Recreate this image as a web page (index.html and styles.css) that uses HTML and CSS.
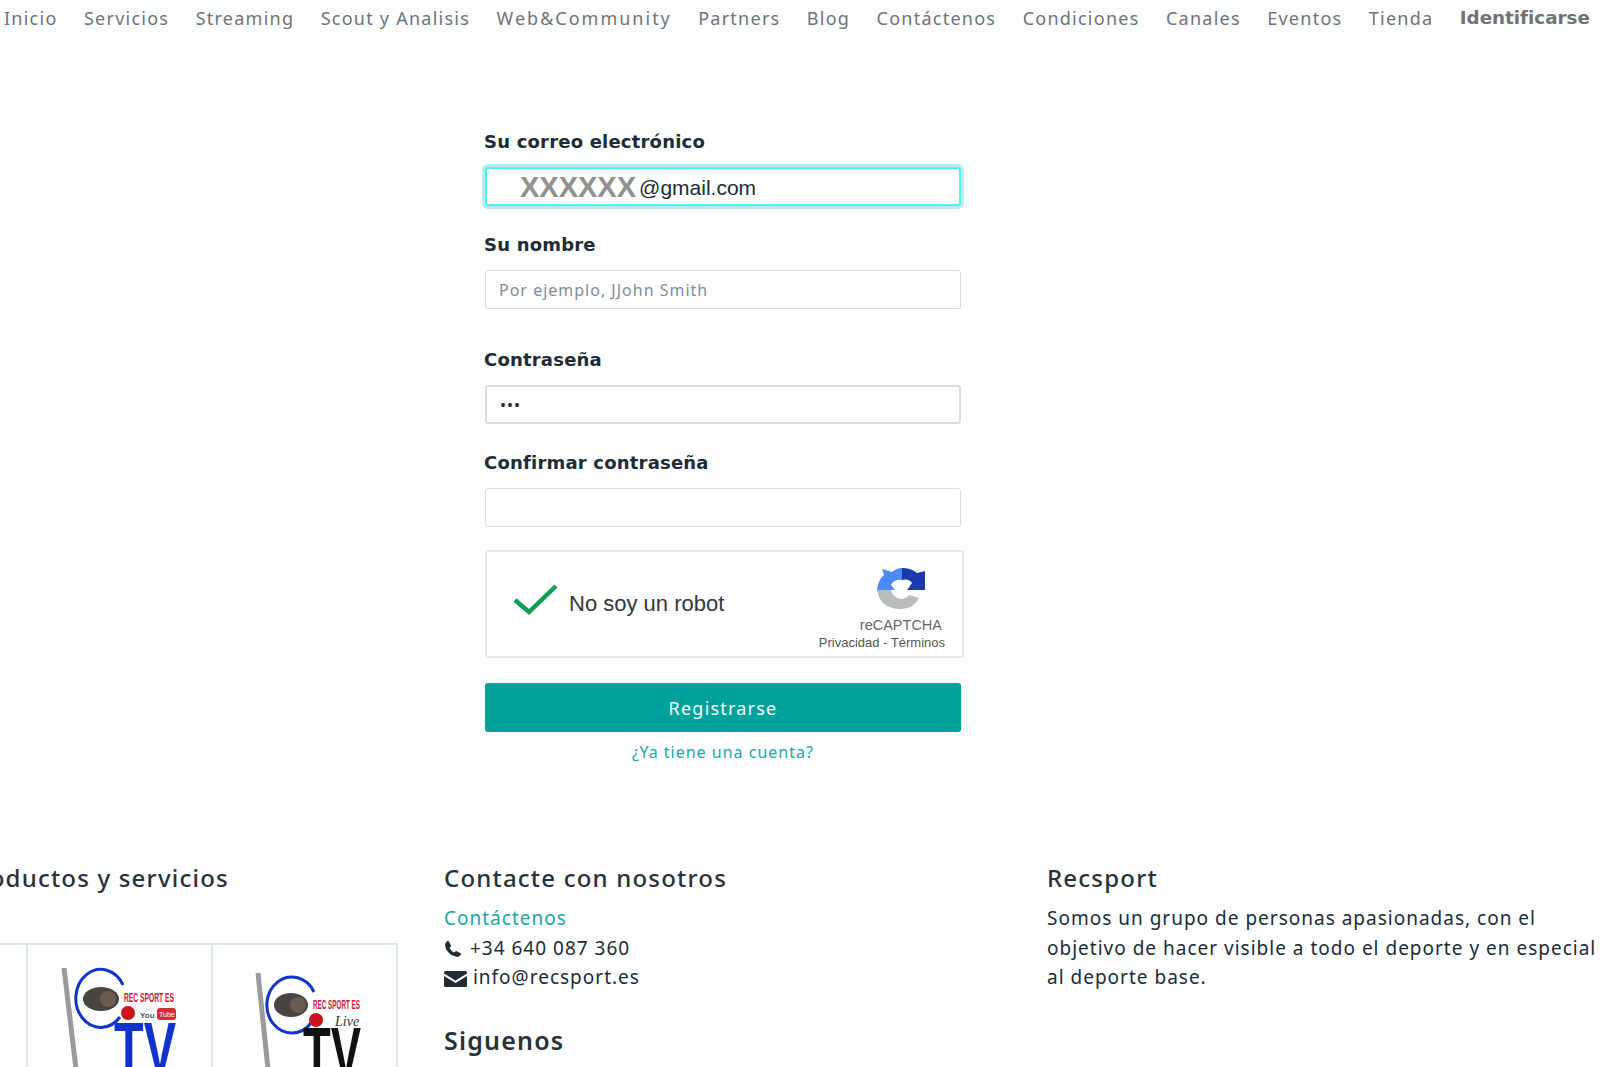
FILE: index.html
```html
<!DOCTYPE html>
<html lang="es">
<head>
    <meta charset="UTF-8">
    <title>Recsport - Registrarse</title>
    <link rel="stylesheet" href="styles.css">
</head>
<body>
    <nav class="topnav">
        <a href="#">Inicio</a>
        <a href="#">Servicios</a>
        <a href="#">Streaming</a>
        <a href="#">Scout y Analisis</a>
        <a href="#" class="wide">Web&amp;Community</a>
        <a href="#">Partners</a>
        <a href="#">Blog</a>
        <a href="#">Contáctenos</a>
        <a href="#">Condiciones</a>
        <a href="#">Canales</a>
        <a href="#">Eventos</a>
        <a href="#">Tienda</a>
        <a href="#" class="active">Identificarse</a>
    </nav>

    <main class="register">
        <div class="field">
            <label>Su correo electrónico</label>
            <div class="control focused"><span class="masked">XXXXXX</span><span class="email">@gmail.com</span></div>
        </div>
        <div class="field field-wide">
            <label>Su nombre</label>
            <input class="control" type="text" placeholder="Por ejemplo, JJohn Smith">
        </div>
        <div class="field">
            <label>Contraseña</label>
            <input class="control strong" type="password" value="123">
        </div>
        <div class="field field-last">
            <label>Confirmar contraseña</label>
            <input class="control" type="password">
        </div>

        <div class="captcha">
            <svg class="captcha-check" viewBox="0 0 46 32" width="46" height="32">
                <path d="M2 16 L16 28 L43 2" fill="none" stroke="#0f9d58" stroke-width="4.5"/>
            </svg>
            <span class="captcha-text">No soy un robot</span>
            <div class="captcha-brand">
                <svg viewBox="0 0 48 42" width="48" height="42">
                    <path d="M0 22 Q1 12 7 7 L5 1 L15 4 Q20 0 25 0 V12 Q17 11 14 17 L18 22 Z" fill="#4a8af4"/>
                    <path d="M25 0 Q34 0 40 5 L48 3 V22 H30 L35 15 Q32 10 25 12 Z" fill="#1c3aa9"/>
                    <path d="M0 22 H14 Q16 30 24 31 Q29 31 32 27 L42 30 Q36 41 24 41 Q3 41 0 22 Z" fill="#b9bcbc"/>
                </svg>
                <span class="captcha-name">reCAPTCHA</span>
                <span class="captcha-links">Privacidad - Términos</span>
            </div>
        </div>

        <button class="submit" type="button">Registrarse</button>
        <a class="login-link" href="#">¿Ya tiene una cuenta?</a>
    </main>

    <footer class="footer">
        <section>
            <h3 class="products-title">Productos y servicios</h3>
            <div class="channels">
                <div class="channel"></div>
                <div class="channel">
                    <svg viewBox="0 0 185 124" width="185" height="124">
                        <path d="M36 23 L48 124" stroke="#9a9a9a" stroke-width="5"/>
                        <path d="M95 40 A25 29 0 1 0 92 72" fill="none" stroke="#1133cc" stroke-width="3"/>
                        <ellipse cx="73" cy="54" rx="18" ry="12" fill="#4a4440"/>
                        <circle cx="80" cy="54" r="8" fill="#6b5c50"/>
                        <circle cx="100" cy="68" r="7" fill="#c8141e"/>
                        <text class="logo-red" x="96" y="57" textLength="50" lengthAdjust="spacingAndGlyphs">REC SPORT ES</text>
                        <text class="logo-you" x="112" y="73">You</text>
                        <rect x="129" y="63" width="19" height="12" rx="3" fill="#d22c36"/>
                        <text class="logo-tube" x="131" y="72">Tube</text>
                        <text class="logo-tv logo-blue" x="86" y="128" textLength="62" lengthAdjust="spacingAndGlyphs">TV</text>
                    </svg>
                </div>
                <div class="channel">
                    <svg viewBox="0 0 185 124" width="185" height="124">
                        <path d="M45 28 L55 124" stroke="#9a9a9a" stroke-width="5"/>
                        <path d="M101 47 A25 28 0 1 0 98 78" fill="none" stroke="#1133cc" stroke-width="3"/>
                        <ellipse cx="78" cy="60" rx="17" ry="12" fill="#4a4440"/>
                        <circle cx="85" cy="60" r="8" fill="#6b5c50"/>
                        <circle cx="103" cy="75" r="7" fill="#c8141e"/>
                        <text class="logo-red" x="100" y="64" textLength="47" lengthAdjust="spacingAndGlyphs">REC SPORT ES</text>
                        <text class="logo-live" x="122" y="81">Live</text>
                        <text class="logo-tv" x="90" y="133" textLength="58" lengthAdjust="spacingAndGlyphs">TV</text>
                    </svg>
                </div>
            </div>
        </section>

        <section>
            <h3>Contacte con nosotros</h3>
            <p><a href="#">Contáctenos</a></p>
            <p class="contact-row">
                <svg class="phone" viewBox="0 0 18 18" width="18" height="18"><path d="M4.5 1 L7 5.5 Q7.2 6.2 6.6 6.8 L5.5 7.9 Q7.2 11 10.2 12.6 L11.4 11.4 Q12 10.9 12.7 11.2 L17 13.6 Q17.4 14 17 14.6 Q15.4 17 13.4 16.9 Q8.2 16.4 4.6 12.6 Q1 8.8 1 4.8 Q1 2.8 3.4 1 Q4 0.6 4.5 1 Z" fill="#212b36"/></svg>
                +34 640 087 360
            </p>
            <p class="contact-row">
                <svg viewBox="0 0 23 16" width="23" height="16"><path d="M0 1.5 Q0 0 1.5 0 H21.5 Q23 0 23 1.5 V2.5 L11.5 9.5 L0 2.5 Z M0 5 L11.5 12 L23 5 V14.5 Q23 16 21.5 16 H1.5 Q0 16 0 14.5 Z" fill="#212b36"/></svg>
                info@recsport.es
            </p>
            <h3 class="follow">Siguenos</h3>
        </section>

        <section>
            <h3>Recsport</h3>
            <p>Somos un grupo de personas apasionadas, con el objetivo de hacer visible a todo el deporte y en especial al deporte base.</p>
        </section>
    </footer>
</body>
</html>
```

FILE: styles.css
```css
html, body {
    margin: 0;
    padding: 0;
    height: 1067px;
    overflow: hidden;
}

body {
    font-family: "Noto Sans", sans-serif;
    font-size: 18px;
    color: #212b36;
    background-color: #fdfefe;
}

a {
    text-decoration: none;
}

/* top menu */
.topnav {
    display: flex;
    gap: 26.4px;
    padding: 5px 0 0 4px;
    height: 31px;
    white-space: nowrap;
}

.topnav a {
    color: #6f7376;
    font-size: 18px;
    line-height: 26px;
    letter-spacing: 1.25px;
}

.topnav .wide {
    letter-spacing: 2px;
}

.topnav .active {
    font-weight: 700;
    font-family: "DejaVu Sans", sans-serif;
    font-size: 18.3px;
    letter-spacing: 0;
}

/* register form */
.register {
    display: flex;
    flex-direction: column;
    width: 476px;
    margin: 95px 0 0 485px;
}

.field {
    margin-bottom: 28px;
}

.field-wide {
    margin-bottom: 40px;
}

.field-last {
    margin-bottom: 23px;
}

.field label {
    display: block;
    font-family: "DejaVu Sans", sans-serif;
    font-weight: 700;
    font-size: 18px;
    letter-spacing: 0.2px;
    line-height: 22px;
    margin: 0 0 14px -1px;
    color: #212b36;
}

.control {
    display: block;
    box-sizing: border-box;
    width: 100%;
    height: 39px;
    padding: 0 13px;
    font-family: "Noto Sans", sans-serif;
    font-size: 16px;
    letter-spacing: 1px;
    line-height: 37px;
    color: #212b36;
    background-color: #fff;
    border: 1px solid #d8dce6;
    border-radius: 3px;
    outline: none;
}

.control::placeholder {
    color: #858c94;
    opacity: 1;
}

.strong {
    border-width: 2px;
}

.focused {
    border: 2px solid #4df3f3;
    box-shadow: 0 0 0 3px #bfeaea;
    padding-left: 33px;
    font-family: "Liberation Sans", sans-serif;
    font-size: 21px;
    letter-spacing: 0;
    white-space: nowrap;
}

.masked {
    font-weight: 700;
    font-size: 29px;
    color: #909090;
    vertical-align: -2px;
    margin-right: 3px;
}

.captcha {
    display: flex;
    align-items: center;
    box-sizing: border-box;
    width: 479px;
    height: 108px;
    margin-bottom: 25px;
    padding-left: 26px;
    background-color: #fff;
    border: 2px solid #e6e8ec;
    border-radius: 3px;
    font-family: "Liberation Sans", sans-serif;
}

.captcha-check {
    margin: -8px 10px 0 0;
}

.captcha-text {
    font-size: 22px;
    color: #33373a;
}

.captcha-brand {
    display: flex;
    flex-direction: column;
    align-items: flex-end;
    margin: 11px 17px 0 auto;
}

.captcha-brand svg {
    margin-right: 20px;
}

.captcha-name {
    font-size: 14.5px;
    line-height: 18px;
    margin: 6px 3px 0 0;
    color: #666;
}

.captcha-links {
    font-size: 13px;
    line-height: 18px;
    color: #555;
}

.submit {
    display: block;
    width: 476px;
    height: 49px;
    padding: 0;
    border: none;
    border-radius: 3px;
    background-color: #00a19a;
    color: #f2fbfa;
    font-family: "Noto Sans", sans-serif;
    font-size: 18px;
    letter-spacing: 1.2px;
    cursor: pointer;
}

.login-link {
    margin-top: 8px;
    text-align: center;
    font-size: 16px;
    letter-spacing: 1px;
    line-height: 24px;
    color: #1ba5ac;
}

/* footer */
.footer {
    display: grid;
    grid-template-columns: repeat(3, 603px);
    margin: 97px 0 0 -159px;
}

.footer h3 {
    margin: 0 0 9px;
    font-size: 24px;
    line-height: 34px;
    font-weight: 500;
    letter-spacing: 1.2px;
    color: #2a3038;
}

.footer .products-title {
    padding-left: 122px;
}

.footer p {
    margin: 0;
    font-size: 19px;
    letter-spacing: 1px;
    line-height: 29.5px;
    width: 560px;
}

.footer p a {
    color: #1ba5ac;
}

.contact-row svg {
    vertical-align: -3px;
}

.contact-row .phone {
    margin-right: 2px;
}

.footer .follow {
    margin-top: 30px;
    font-size: 25px;
    font-weight: 600;
}

.channels {
    display: grid;
    grid-template-columns: 187px 185px 183px;
    width: 555px;
    height: 140px;
    margin-top: 48px;
    border-top: 2px solid #e3e5ec;
    border-right: 2px solid #e3e5ec;
}

.channel {
    box-sizing: border-box;
    border-right: 2px solid #e3e5ec;
}

.channel:last-child {
    border-right: none;
}

.channel svg {
    display: block;
}

.logo-red {
    font-family: "Liberation Sans", sans-serif;
    font-weight: 700;
    font-size: 13px;
    fill: #c8202c;
}

.logo-you {
    font-family: "Liberation Sans", sans-serif;
    font-weight: 700;
    font-size: 8px;
    fill: #555;
}

.logo-tube {
    font-family: "Liberation Sans", sans-serif;
    font-size: 7px;
    fill: #fff;
}

.logo-live {
    font-family: "Liberation Serif", serif;
    font-style: italic;
    font-size: 14px;
    fill: #333;
}

.logo-tv {
    font-family: "Liberation Sans", sans-serif;
    font-weight: 700;
    font-size: 72px;
    fill: #111;
}

.logo-blue {
    fill: #1133cc;
}
```
